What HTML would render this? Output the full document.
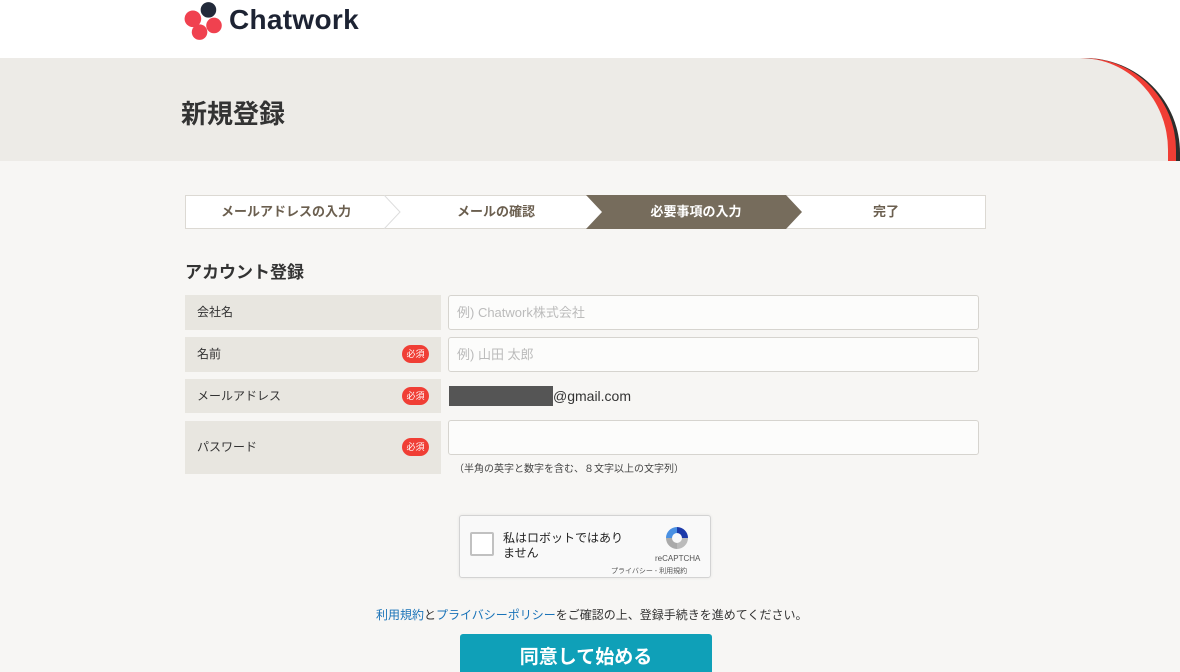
<!DOCTYPE html><html><head><meta charset="utf-8"><style>
*{box-sizing:border-box;margin:0;padding:0}
html,body{width:1180px;height:672px;overflow:hidden}
body{background:#f7f6f4;font-family:"Liberation Sans","Noto Sans CJK JP",sans-serif;position:relative;color:#333}
.top{position:absolute;left:0;top:0;width:1180px;height:58px;background:#fff}
.a{position:absolute}
.steps{position:absolute;left:185px;top:195px;width:801px;height:34px;background:#fff;border:1px solid #dcd9d3}
.st{position:absolute;top:0;height:32px;line-height:32px;text-align:center;font-size:13px;font-weight:bold;color:#6b5f4f}
.lab{position:absolute;left:185px;width:256px;background:#e8e6e0;font-size:12px;color:#333;padding-left:12px}
.inp{position:absolute;left:448px;width:531px;height:35px;background:#fcfcfb;border:1px solid #d6d4cf;border-radius:3px;font-size:13px;color:#bbb;padding-left:8px;line-height:33px}
.req{position:absolute;left:402px;width:27px;height:18px;border-radius:9px;background:#f03e35;color:#fff;font-size:9px;text-align:center;line-height:18px}
</style></head><body>
<div class="top"></div>
<div class="a" style="left:0;top:58px;width:1180px;height:103px;background:#fff"></div>
<div class="a" style="left:0;top:58px;width:1180px;height:103px;background:#2e2e2c;border-top-right-radius:95px"></div>
<div class="a" style="left:0;top:58px;width:1176px;height:103px;background:#f03e35;border-top-right-radius:92px"></div>
<div class="a" style="left:0;top:58px;width:1168px;height:103px;background:#edebe7;border-top-right-radius:88px 92px"></div>
<svg class="a" style="left:184px;top:1px" width="40" height="40" viewBox="0 0 36 36"><circle cx="22" cy="8" r="7" fill="#222a3a"/><circle cx="8" cy="16" r="7.5" fill="#f0414f"/><circle cx="14" cy="28" r="7" fill="#f0414f"/><circle cx="27" cy="22" r="7" fill="#f0414f"/></svg>
<div class="a" style="left:229px;top:4px;font-size:28px;font-weight:bold;color:#1d2333;letter-spacing:0.3px">Chatwork</div>
<div class="a" style="left:181px;top:94px;font-size:26px;font-weight:bold;color:#333">新規登録</div>
<div class="steps">
<div class="st" style="left:0;width:200px">メールアドレスの入力</div>
<svg class="a" style="left:198px;top:-1px" width="20" height="34"><path d="M0 0 L16 17 L0 34" fill="none" stroke="#ddd"/></svg>
<div class="st" style="left:200px;width:220px">メールの確認</div>
<svg class="a" style="left:400px;top:-1px" width="220" height="34"><path d="M0 0 H200 L216 17 L200 34 H0 L16 17Z" fill="#766c5c"/></svg>
<div class="st" style="left:410px;width:200px;color:#fff">必要事項の入力</div>
<div class="st" style="left:600px;width:200px">完了</div>
</div>
<div class="a" style="left:185px;top:258px;font-size:17px;font-weight:bold">アカウント登録</div>
<div class="lab" style="top:295px;height:35px;line-height:35px">会社名</div>
<div class="inp" style="top:295px">例) Chatwork株式会社</div>
<div class="lab" style="top:337px;height:35px;line-height:35px">名前</div><div class="req" style="top:345px">必須</div>
<div class="inp" style="top:337px">例) 山田 太郎</div>
<div class="lab" style="top:379px;height:34px;line-height:34px">メールアドレス</div><div class="req" style="top:387px">必須</div>
<div class="a" style="left:449px;top:386px;width:104px;height:20px;background:#555"></div>
<div class="a" style="left:553px;top:388px;font-size:14px;color:#333">@gmail.com</div>
<div class="lab" style="top:421px;height:53px;line-height:53px">パスワード</div><div class="req" style="top:438px">必須</div>
<div class="inp" style="top:420px"></div>
<div class="a" style="left:454px;top:460px;font-size:10px;color:#444">（半角の英字と数字を含む、８文字以上の文字列）</div>
<div class="a" style="left:459px;top:515px;width:252px;height:63px;background:#f9f9f9;border:1px solid #d3d3d3;border-radius:3px;box-shadow:0 0 3px rgba(0,0,0,.08)"></div>
<div class="a" style="left:470px;top:532px;width:24px;height:24px;border:2px solid #c1c1c1;border-radius:2px;background:#fff"></div>
<div class="a" style="left:503px;top:531px;font-size:12px;line-height:15px;color:#222">私はロボットではあり<br>ません</div>
<svg class="a" style="left:663px;top:524px" width="28" height="28" viewBox="0 0 28 28"><path d="M14 3 A11 11 0 0 1 25 14 H19 A5 5 0 0 0 14 9Z" fill="#1c3aa9"/><path d="M3 14 A11 11 0 0 1 14 3 V9 A5 5 0 0 0 9 14Z" fill="#4a90e2"/><path d="M3 14 H9 A5 5 0 0 0 14 19 V25 A11 11 0 0 1 3 14Z" fill="#aaa"/><path d="M14 19 A5 5 0 0 0 19 14 H25 A11 11 0 0 1 14 25Z" fill="#bbb"/></svg>
<div class="a" style="left:655px;top:554px;font-size:8px;color:#555">reCAPTCHA</div>
<div class="a" style="left:611px;top:566px;font-size:7px;color:#555">プライバシー - 利用規約</div>
<div class="a" style="left:376px;top:606px;font-size:12px;color:#333"><span style="color:#1a73b8">利用規約</span>と<span style="color:#1a73b8">プライバシーポリシー</span>をご確認の上、登録手続きを進めてください。</div>
<div class="a" style="left:460px;top:634px;width:252px;height:38px;overflow:hidden;background:#0fa0b8;border-radius:3px 3px 0 0;color:#fff;font-size:19px;font-weight:bold;text-align:center;line-height:48px">同意して始める</div>
</body></html>
